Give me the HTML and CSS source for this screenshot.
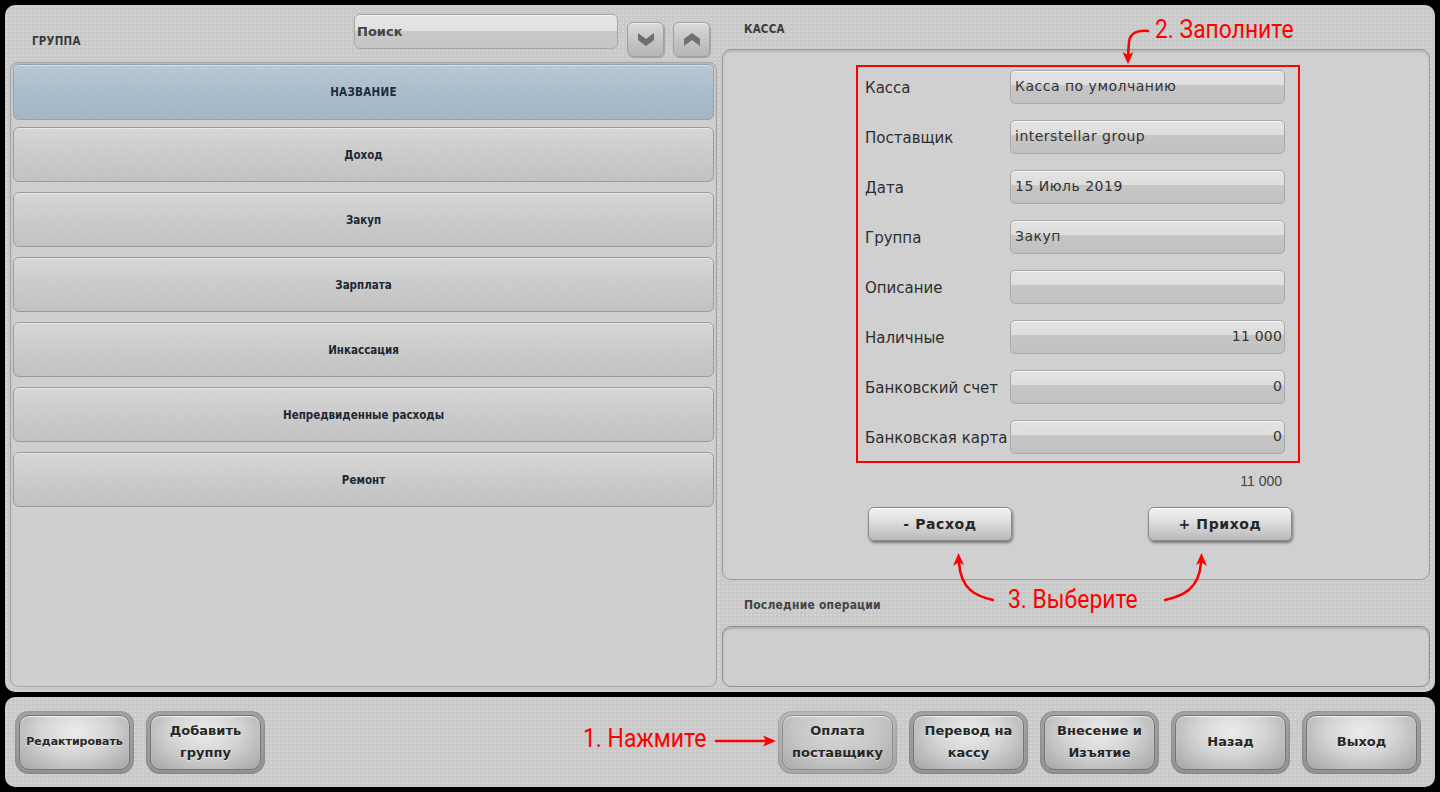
FILE: index.html
```html
<!DOCTYPE html>
<html lang="ru">
<head>
<meta charset="utf-8">
<title>Касса</title>
<link rel="stylesheet" href="styles.css">
</head>
<body>
<div class="app">
  <div class="main">
    <section class="left">
      <div class="left-head">
        <div class="caption group-caption">ГРУППА</div>
        <div class="search">Поиск</div>
        <div class="arrow-btn">
          <svg width="16" height="13" viewBox="0 0 16 13"><path d="M0 0 L8 6 L16 0 L16 7 L8 13 L0 7 Z" fill="#6f6f6f"/></svg>
        </div>
        <div class="arrow-btn">
          <svg width="16" height="13" viewBox="0 0 16 13"><path d="M0 13 L8 7 L16 13 L16 6 L8 0 L0 6 Z" fill="#6f6f6f"/></svg>
        </div>
      </div>
      <div class="list">
        <div class="row row-head">НАЗВАНИЕ</div>
        <div class="row">Доход</div>
        <div class="row">Закуп</div>
        <div class="row">Зарплата</div>
        <div class="row">Инкассация</div>
        <div class="row">Непредвиденные расходы</div>
        <div class="row">Ремонт</div>
      </div>
    </section>
    <section class="right">
      <div class="right-head"><div class="caption">КАССА</div></div>
      <div class="cash">
        <div class="form">
          <div class="label">Касса</div><div class="field">Касса по умолчанию</div>
          <div class="label">Поставщик</div><div class="field">interstellar group</div>
          <div class="label">Дата</div><div class="field">15 Июль 2019</div>
          <div class="label">Группа</div><div class="field">Закуп</div>
          <div class="label">Описание</div><div class="field"></div>
          <div class="label">Наличные</div><div class="field num">11 000</div>
          <div class="label">Банковский счет</div><div class="field num">0</div>
          <div class="label">Банковская карта</div><div class="field num">0</div>
        </div>
        <div class="total">11 000</div>
        <div class="actions">
          <div class="act-btn">- Расход</div>
          <div class="act-btn">+ Приход</div>
        </div>
      </div>
      <div class="ops-head"><div class="caption ops-caption">Последние операции</div></div>
      <div class="ops"></div>
    </section>
  </div>
  <div class="bar">
    <div class="bar-group">
      <div class="bbtn"><div class="bbtn-in small">Редактировать</div></div>
      <div class="bbtn"><div class="bbtn-in">Добавить<br>группу</div></div>
    </div>
    <div class="bar-group bar-right">
      <div class="bbtn active"><div class="bbtn-in">Оплата<br>поставщику</div></div>
      <div class="bbtn"><div class="bbtn-in">Перевод на<br>кассу</div></div>
      <div class="bbtn"><div class="bbtn-in">Внесение и<br>Изъятие</div></div>
      <div class="bbtn"><div class="bbtn-in">Назад</div></div>
      <div class="bbtn"><div class="bbtn-in">Выход</div></div>
    </div>
  </div>

  <div class="notes">
    <svg class="notes-svg" width="1440" height="792" viewBox="0 0 1440 792">
      <g fill="none" stroke="#ff0000" stroke-width="2.6" stroke-linecap="round">
        <path d="M716 741 L766 741"/>
        <path d="M1148 31 C1138 30 1130 33 1129 42 L1128 56"/>
        <path d="M993 600 C976 596 961 590 959 563"/>
        <path d="M1165 600 C1183 596 1199 589 1201 563"/>
      </g>
      <g fill="#ff0000">
        <polygon points="776,741 763,735.5 766,741 763,746.5"/>
        <polygon points="1128,64 1122.5,52 1128,55 1133.5,52"/>
        <polygon points="958.5,553 953,566 959,562 964,565"/>
        <polygon points="1201.5,553 1196,565 1201,562 1207,566"/>
      </g>
    </svg>
    <div class="note note1">1. Нажмите</div>
    <div class="note note2">2. Заполните</div>
    <div class="note note3">3. Выберите</div>
  </div>
</div>
</body>
</html>
```
FILE: styles.css
```css
* { box-sizing: border-box; }
html, body { margin: 0; padding: 0; }
body {
  background: #000;
  width: 1440px;
  height: 792px;
  overflow: hidden;
  font-family: "DejaVu Sans", "Liberation Sans", sans-serif;
  color: #333;
}
.app {
  position: relative;
  width: 1440px;
  height: 792px;
  padding: 5px;
  display: flex;
  flex-direction: column;
  gap: 5px;
}
.main {
  height: 687px;
  display: flex;
  border-radius: 10px;
  background-color: #c9c9c9;
  background-image: radial-gradient(rgba(255,255,255,0.18) 1px, transparent 1.2px);
  background-size: 4px 4px;
}
.caption {
  font-family: "DejaVu Sans Condensed", "DejaVu Sans", sans-serif;
  font-weight: bold;
  font-size: 11.5px;
  color: #3a3a3a;
  letter-spacing: 0.2px;
}

/* left column */
.left {
  width: 714px;
  padding: 0 2px 5px 5px;
  display: flex;
  flex-direction: column;
}
.left-head {
  height: 57px;
  display: flex;
  align-items: flex-start;
  padding-right: 7px;
}
.group-caption {
  flex: 1;
  margin-top: 29px;
  padding-left: 22px;
}
.search {
  width: 264px;
  height: 35px;
  margin-top: 9px;
  border: 1px solid #a6a6a6;
  border-radius: 6px;
  background: linear-gradient(#e6e6e6 0, #e1e1e1 48%, #c9c9c9 48%, #c6c6c6 100%);
  font-size: 13px;
  font-weight: bold;
  color: #444;
  padding: 9px 0 0 2px;
  box-shadow: inset 0 1px 0 rgba(255,255,255,0.5);
}
.arrow-btn {
  width: 37px;
  height: 35px;
  margin-top: 17px;
  margin-left: 9px;
  border: 1px solid #a0a0a0;
  border-radius: 6px;
  background: linear-gradient(#dadada, #c2c2c2 60%, #b6b6b6);
  display: flex;
  align-items: center;
  justify-content: center;
  box-shadow: 1px 1px 1px rgba(0,0,0,0.2), inset 0 1px 0 #ececec;
}
.list {
  flex: 1;
  border: 1px solid #a5a5a5;
  border-radius: 8px;
  background: #cfcfcf;
  padding: 1px 2px;
  display: flex;
  flex-direction: column;
  gap: 10px;
  box-shadow: inset 0 1px 2px rgba(0,0,0,0.15);
}
.row {
  height: 55px;
  border: 1px solid #9a9a9a;
  border-radius: 6px;
  background-color: #cbcbcb;
  background-image:
    repeating-linear-gradient(45deg, rgba(255,255,255,0.05) 0 1px, transparent 1px 3px),
    linear-gradient(#d6d6d6, #cacaca 50%, #c1c1c1);
  display: flex;
  align-items: center;
  justify-content: center;
  font-family: "DejaVu Sans Condensed", "DejaVu Sans", sans-serif;
  font-weight: bold;
  font-size: 11.5px;
  color: #1c2733;
  box-shadow: inset 0 1px 0 rgba(255,255,255,0.45);
}
.row-head {
  height: 56px;
  margin-bottom: -3px;
  border-color: #8fa3b2;
  background-image:
    repeating-linear-gradient(45deg, rgba(255,255,255,0.05) 0 1px, transparent 1px 3px),
    linear-gradient(#b8c8d4, #a9bccb 50%, #a2b5c4);
  color: #1d2c3c;
  letter-spacing: 0.3px;
}

/* right column */
.right {
  flex: 1;
  padding: 0 5px 5px 3px;
  display: flex;
  flex-direction: column;
}
.right-head {
  height: 44px;
  padding: 17px 0 0 22px;
}
.cash {
  height: 531px;
  border: 1px solid #9c9c9c;
  border-radius: 9px;
  background: #d0d0d0;
  box-shadow: inset 0 2px 2px rgba(0,0,0,0.12);
  padding: 15px 0 0 133px;
  display: flex;
  flex-direction: column;
  align-items: flex-start;
}
.form {
  width: 444px;
  border: 2px solid #ff0000;
  padding: 3px 13px 7px 7px;
  display: grid;
  grid-template-columns: 145px 275px;
  grid-auto-rows: 34px;
  row-gap: 16px;
}
.label {
  font-size: 15px;
  color: #2e2e2e;
  display: flex;
  align-items: center;
  padding-top: 1px;
  white-space: nowrap;
}
.field {
  border: 1px solid #a9a9a9;
  border-radius: 5px;
  background: linear-gradient(#e3e3e3 0, #dedede 44%, #c6c6c6 44%, #c1c1c1 100%);
  font-size: 14px;
  letter-spacing: 0.5px;
  color: #333;
  padding: 7px 2px 0 4px;
  white-space: nowrap;
  box-shadow: inset 0 1px 0 rgba(255,255,255,0.6);
}
.field.num { text-align: right; letter-spacing: 0.2px; }
.total {
  width: 444px;
  margin-top: 10px;
  text-align: right;
  padding-right: 18px;
  font-family: "Liberation Sans", Arial, sans-serif;
  font-size: 14px;
  color: #444;
  line-height: 16px;
}
.actions {
  margin-top: 18px;
  margin-left: 12px;
  display: flex;
  gap: 136px;
}
.act-btn {
  width: 144px;
  height: 34px;
  border-radius: 6px;
  border: 1px solid #8a8a8a;
  background: linear-gradient(#f2f2f2, #dcdcdc 45%, #b9b9b9);
  box-shadow: 1px 2px 3px rgba(0,0,0,0.45), inset 0 1px 0 #fff;
  display: flex;
  align-items: center;
  justify-content: center;
  font-size: 14px;
  font-weight: bold;
  letter-spacing: 0.6px;
  color: #262626;
}
.ops-head {
  height: 46px;
  padding: 18px 0 0 22px;
}
.ops-caption { font-size: 12px; color: #444; }
.ops {
  flex: 1;
  border: 1px solid #8e8e8e;
  border-radius: 9px;
  background: #cecece;
  box-shadow: inset 0 2px 2px rgba(0,0,0,0.15);
}

/* bottom bar */
.bar {
  height: 90px;
  border-radius: 10px;
  background-color: #c9c9c9;
  background-image: radial-gradient(rgba(255,255,255,0.18) 1px, transparent 1.2px);
  background-size: 4px 4px;
  display: flex;
  align-items: center;
  padding: 0 14px 0 10px;
}
.bar-group { display: flex; gap: 12px; }
.bar-right { margin-left: auto; }
.bbtn {
  width: 119px;
  height: 63px;
  border-radius: 14px;
  background: linear-gradient(#a5a5a5, #959595);
  padding: 4px;
  box-shadow: inset 0 0 3px rgba(0,0,0,0.25);
}
.bbtn-in {
  width: 100%;
  height: 100%;
  border-radius: 10px;
  border: 1px solid #747474;
  background: radial-gradient(ellipse at 50% 30%, #ececec 0, #d4d4d4 45%, #a4a4a4 100%);
  display: flex;
  align-items: center;
  justify-content: center;
  text-align: center;
  font-size: 13px;
  line-height: 22px;
  font-weight: bold;
  color: #262626;
  text-shadow: 0 1px 0 rgba(255,255,255,0.55);
  box-shadow: inset 0 1px 1px rgba(255,255,255,0.7);
}
.bbtn-in.small { font-size: 11px; }
.bbtn.active { background: linear-gradient(#bcbcbc, #a9a9a9); }
.bbtn.active .bbtn-in {
  border-color: #8a8a8a;
  background: radial-gradient(ellipse at 50% 25%, #d7d7d7 0, #c6c6c6 55%, #a9a9a9 100%);
}

/* annotations overlay */
.notes {
  position: absolute;
  left: 0;
  top: 0;
  width: 1440px;
  height: 792px;
  pointer-events: none;
}
.notes-svg { position: absolute; left: 0; top: 0; }
.note {
  position: absolute;
  font-family: Roboto, "Liberation Sans", sans-serif;
  font-size: 26px;
  line-height: 30px;
  color: #ff0000;
  white-space: nowrap;
  transform: scaleX(0.88);
  transform-origin: 0 0;
}
.note1 { left: 583px; top: 723px; }
.note2 { left: 1155px; top: 14px; }
.note3 { left: 1008px; top: 584px; }
```
